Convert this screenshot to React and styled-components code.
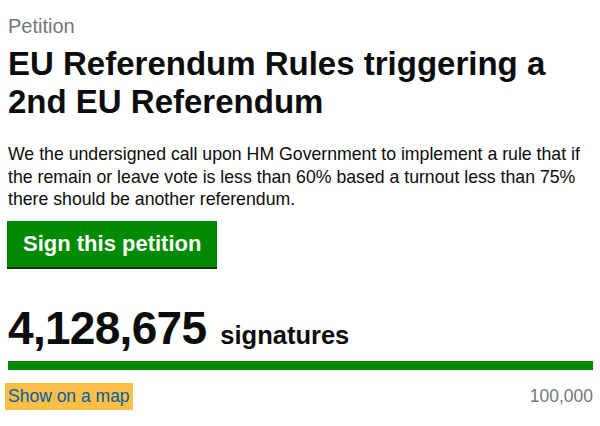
import React from 'react';
import styled, { createGlobalStyle } from 'styled-components';

const GlobalStyle = createGlobalStyle`
  body {
    margin: 0;
    background: #fff;
    font-family: "Liberation Sans", Arial, sans-serif;
    color: #0b0c0c;
  }
`;

const Page = styled.main`
  padding: 14px 7px 0 8px;
`;

const Caption = styled.div`
  font-size: 20px;
  line-height: 24px;
  color: #6f777b;
`;

const Title = styled.h1`
  margin: 7px 0 22px;
  font-size: 33px;
  line-height: 38px;
  font-weight: 700;
`;

const Action = styled.p`
  margin: 0 0 10px;
  font-size: 17.7px;
  line-height: 22.5px;
`;

const SignButton = styled.button`
  display: block;
  margin: 0 0 36px -1px;
  padding: 9px 16px 9px;
  border: 0;
  background: #008a00;
  box-shadow: 0 2px 0 #003618;
  color: #fff;
  font-family: inherit;
  font-size: 22px;
  line-height: 28px;
  font-weight: 700;
  cursor: pointer;
`;

const Count = styled.div`
  display: flex;
  align-items: baseline;
  gap: 14px;
  margin-bottom: 8px;
`;

const Number = styled.span`
  font-size: 46px;
  line-height: 50px;
  font-weight: 700;
  letter-spacing: -0.7px;
`;

const Label = styled.span`
  font-size: 25.5px;
  font-weight: 700;
`;

const Bar = styled.div`
  height: 9px;
  background: #008a00;
`;

const Footer = styled.div`
  display: flex;
  justify-content: space-between;
  align-items: center;
  margin-top: 13px;
`;

const MapLink = styled.a`
  margin-left: -3px;
  padding: 2px 3px 3px;
  background: #ffbf47;
  color: #005ea5;
  font-size: 17.5px;
  line-height: 22px;
  text-decoration: none;
`;

const Goal = styled.span`
  color: #6f777b;
  font-size: 17.5px;
`;

export default function App() {
  return (
    <>
      <GlobalStyle />
      <Page>
        <Caption>Petition</Caption>
        <Title>EU Referendum Rules triggering a 2nd EU Referendum</Title>
        <Action>
          We the undersigned call upon HM Government to implement a rule that if the remain or
          leave vote is less than 60% based a turnout less than 75% there should be another
          referendum.
        </Action>
        <SignButton>Sign this petition</SignButton>
        <Count>
          <Number>4,128,675</Number>
          <Label>signatures</Label>
        </Count>
        <Bar />
        <Footer>
          <MapLink href="#">Show on a map</MapLink>
          <Goal>100,000</Goal>
        </Footer>
      </Page>
    </>
  );
}
